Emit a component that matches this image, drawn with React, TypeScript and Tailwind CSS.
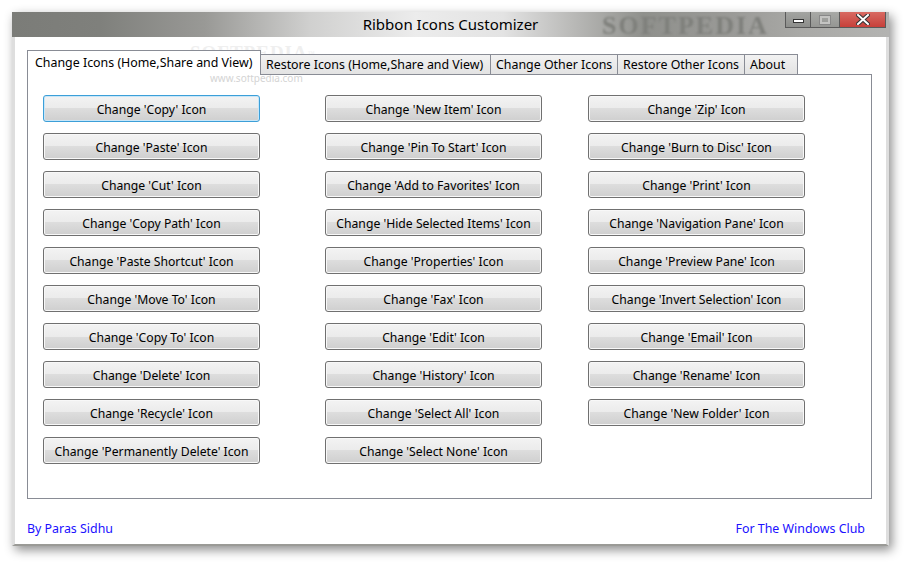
import React from "react";

const col1 = [
  "Change 'Copy' Icon",
  "Change 'Paste' Icon",
  "Change 'Cut' Icon",
  "Change 'Copy Path' Icon",
  "Change 'Paste Shortcut' Icon",
  "Change 'Move To' Icon",
  "Change 'Copy To' Icon",
  "Change 'Delete' Icon",
  "Change 'Recycle' Icon",
  "Change 'Permanently Delete' Icon",
];
const col2 = [
  "Change 'New Item' Icon",
  "Change 'Pin To Start' Icon",
  "Change 'Add to Favorites' Icon",
  "Change 'Hide Selected Items' Icon",
  "Change 'Properties' Icon",
  "Change 'Fax' Icon",
  "Change 'Edit' Icon",
  "Change 'History' Icon",
  "Change 'Select All' Icon",
  "Change 'Select None' Icon",
];
const col3 = [
  "Change 'Zip' Icon",
  "Change 'Burn to Disc' Icon",
  "Change 'Print' Icon",
  "Change 'Navigation Pane' Icon",
  "Change 'Preview Pane' Icon",
  "Change 'Invert Selection' Icon",
  "Change 'Email' Icon",
  "Change 'Rename' Icon",
  "Change 'New Folder' Icon",
];

function Btn({ label, focused }: { label: string; focused?: boolean }) {
  return (
    <button
      className={
        "h-[27px] w-[217px] rounded-[3px] border pt-[3px] text-[12.2px] leading-none text-black bg-[linear-gradient(#f3f3f3_0%,#ebebeb_50%,#dddddd_50%,#cfcfcf_100%)] " +
        (focused
          ? "border-[#3c9fd8] shadow-[inset_0_0_0_1px_#c8e6f8]"
          : "border-[#707070] shadow-[inset_0_0_0_1px_#f8f8f8]")
      }
    >
      {label}
    </button>
  );
}

function Column({ items, focusFirst }: { items: string[]; focusFirst?: boolean }) {
  return (
    <div className="flex flex-col gap-[11px]">
      {items.map((t, i) => (
        <Btn key={t} label={t} focused={focusFirst && i === 0} />
      ))}
    </div>
  );
}

export default function App() {
  return (
    <div
      className="w-[909px] h-[567px] bg-white overflow-hidden pt-[12px] pl-[12px]"
      style={{ fontFamily: '"Noto Sans", "Open Sans", sans-serif' }}
    >
      <div className="w-[877px] h-[534px] flex flex-col shadow-[3px_4px_10px_rgba(0,0,0,0.45)]">
        {/* Title bar */}
        <div className="relative h-[25px] flex items-center justify-center bg-[linear-gradient(90deg,#7b7c78_0%,#7f807c_10%,#999996_22%,#d0d0cf_34%,#ececec_46%,#e3e3e3_56%,#b9b9b7_64%,#8f908c_72%,#9a9a97_82%,#a9a9a6_90%,#b3b3b1_100%)]">
          <span
            className="absolute left-[590px] top-[1px] text-[26px] font-bold tracking-[2px] text-[#7f807c] blur-[1px] leading-none"
            style={{ fontFamily: '"Liberation Serif", serif' }}
          >
            SOFTPEDIA
          </span>
          <span className="relative text-[15px] text-black leading-none">Ribbon Icons Customizer</span>
          <div className="absolute right-[3px] top-0 flex h-[16px] border border-[#5a5a5a] border-t-0 bg-[#5a5a5a] gap-px">
            <div className="w-[24px] h-full bg-[linear-gradient(#a3a4a1,#8d8e8b)] flex items-center justify-center">
              <div className="w-[11px] h-[4px] bg-white border border-[#333] mt-[3px]" />
            </div>
            <div className="w-[28px] h-full bg-[linear-gradient(#a8a9a6,#959693)] flex items-center justify-center">
              <div className="w-[10px] h-[8px] border-2 border-[#c4c4c2] outline outline-1 outline-[#888]" />
            </div>
            <div className="w-[45px] h-full bg-[linear-gradient(#d86a62,#c7403a)] flex items-center justify-center">
              <svg width="14" height="11" viewBox="0 0 14 11">
                <path d="M2 1 L12 10 M12 1 L2 10" stroke="#333" strokeWidth="4" strokeLinecap="square" />
                <path d="M2 1 L12 10 M12 1 L2 10" stroke="#fff" strokeWidth="2" strokeLinecap="square" />
              </svg>
            </div>
          </div>
        </div>

        {/* Body */}
        <div className="relative flex-1 bg-white border-x-[3px] border-b-[2px] border-x-[#dedede] border-b-[#9a9a96] px-[12px] pt-[13px] flex flex-col">
          {/* watermark */}
          <span
            className="absolute left-[175px] top-[6px] text-[19px] font-bold tracking-[1px] text-[#efefef] leading-none"
            style={{ fontFamily: '"Liberation Serif", serif' }}
          >
            SOFTPEDIA<sup className="text-[7px] font-normal">™</sup>
          </span>
          <span className="absolute left-[195px] top-[36px] text-[10px] text-[#d4d4d4] leading-none">
            www.softpedia.com
          </span>

          {/* tabs */}
          <div className="relative flex items-end h-[25px] z-10 text-[12.4px] text-black whitespace-nowrap">
            <div className="h-[25px] w-[234px] bg-white border border-b-0 border-[#898c95] pl-[7px] pt-[3px]">
              Change Icons (Home,Share and View)
            </div>
            <div className="h-[21px] w-[230px] border border-l-0 border-[#898c95] bg-[linear-gradient(#f2f2f2,#e3e3e3)] pl-[5px] pt-[1px]">
              Restore Icons (Home,Share and View)
            </div>
            <div className="h-[21px] w-[127px] border border-l-0 border-[#898c95] bg-[linear-gradient(#f2f2f2,#e3e3e3)] pl-[5px] pt-[1px]">
              Change Other Icons
            </div>
            <div className="h-[21px] w-[127px] border border-l-0 border-[#898c95] bg-[linear-gradient(#f2f2f2,#e3e3e3)] pl-[5px] pt-[1px]">
              Restore Other Icons
            </div>
            <div className="h-[21px] w-[53px] border border-l-0 border-[#898c95] bg-[linear-gradient(#f2f2f2,#e3e3e3)] pl-[5px] pt-[1px]">
              About
            </div>
          </div>

          {/* panel */}
          <div className="h-[425px] w-[845px] -mt-px border border-[#898c95] pl-[15px] pt-[20px] flex">
            <Column items={col1} focusFirst />
            <div className="ml-[65px]">
              <Column items={col2} />
            </div>
            <div className="ml-[46px]">
              <Column items={col3} />
            </div>
          </div>

          {/* footer */}
          <div className="flex justify-between pt-[21px] pr-[9px] text-[12.4px] text-[#2010ff]">
            <span>By Paras Sidhu</span>
            <span>For The Windows Club</span>
          </div>
        </div>
      </div>
    </div>
  );
}
